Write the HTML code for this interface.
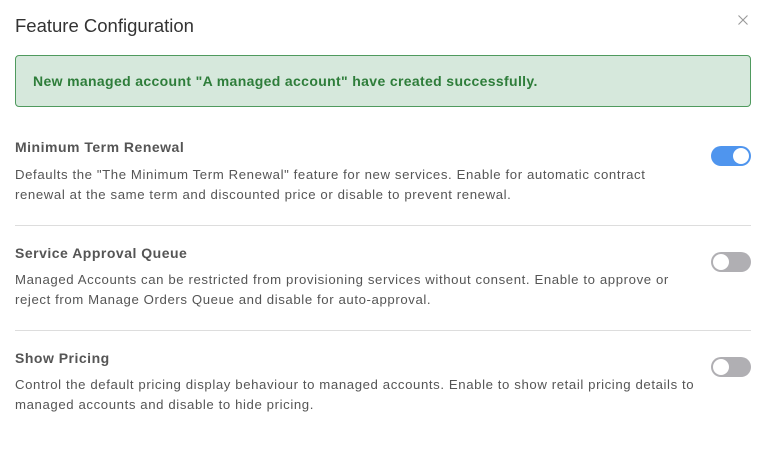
<!DOCTYPE html>
<html><head><style>
body{margin:0;width:766px;height:450px;background:#fff;font-family:"Liberation Sans",sans-serif;position:relative;overflow:hidden;color:#555}
.t{position:absolute;left:15px;top:15px;font-size:18.5px;color:#333}
.x{position:absolute;left:738px;top:15px}
.al{position:absolute;left:15px;top:55px;width:736px;height:52px;background:#d6e8dc;border:1px solid #4f9a5e;border-radius:4px;box-sizing:border-box}
.al span{position:absolute;left:17px;top:17px;font-size:14px;font-weight:bold;color:#2e7d3a;letter-spacing:0.35px}
.h{position:absolute;left:15px;font-size:14px;font-weight:bold;color:#555;letter-spacing:0.5px}
.d{position:absolute;left:15px;font-size:13.2px;line-height:20px;color:#555;width:720px;letter-spacing:0.6px}
.hr{position:absolute;left:15px;width:736px;height:1px;background:#ddd}
.tg{position:absolute;left:711px;width:40px;height:20px;border-radius:10px;background:#b0afb3}
.tg i{position:absolute;top:2px;left:2px;width:16px;height:16px;border-radius:50%;background:#fff}
.tg.on{background:#4f95ee}.tg.on i{left:22px}
</style></head><body>
<div class="t">Feature Configuration</div>
<svg class="x" width="10" height="10" viewBox="0 0 10 10"><path d="M0.5 0.5L9.5 9.5M9.5 0.5L0.5 9.5" stroke="#999" stroke-width="1.1"/></svg>
<div class="al"><span>New managed account "A managed account" have created successfully.</span></div>
<div class="h" style="top:139px">Minimum Term Renewal</div>
<div class="d" style="top:165px">Defaults the "The Minimum Term Renewal" feature for new services. Enable for automatic contract<br>renewal at the same term and discounted price or disable to prevent renewal.</div>
<div class="tg on" style="top:146px"><i></i></div>
<div class="hr" style="top:225px"></div>
<div class="h" style="top:245px">Service Approval Queue</div>
<div class="d" style="top:270px">Managed Accounts can be restricted from provisioning services without consent. Enable to approve or<br>reject from Manage Orders Queue and disable for auto-approval.</div>
<div class="tg" style="top:252px"><i></i></div>
<div class="hr" style="top:330px"></div>
<div class="h" style="top:350px">Show Pricing</div>
<div class="d" style="top:375px">Control the default pricing display behaviour to managed accounts. Enable to show retail pricing details to<br>managed accounts and disable to hide pricing.</div>
<div class="tg" style="top:357px"><i></i></div>
</body></html>
